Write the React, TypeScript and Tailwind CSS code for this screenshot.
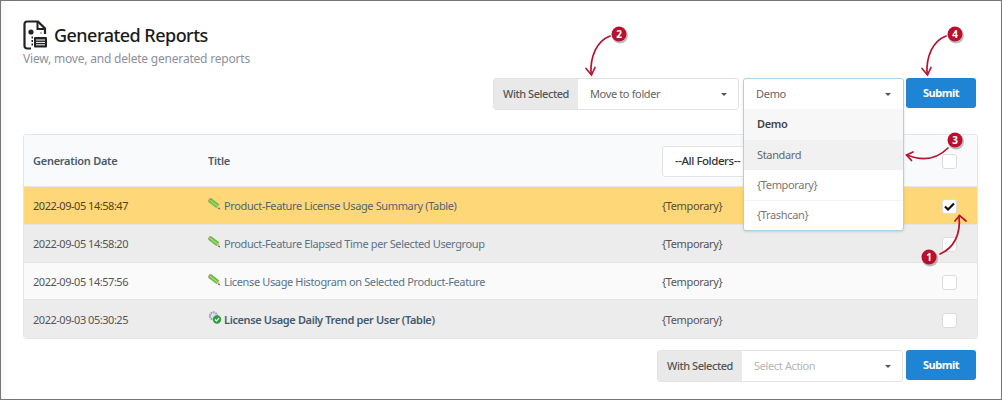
const font = { fontFamily: '"Noto Sans", "Open Sans", sans-serif' };

type Row = {
  date: string;
  title: string;
  done?: boolean;
  checked?: boolean;
  bg: string;
};

const rows: Row[] = [
  { date: "2022-09-05 14:58:47", title: "Product-Feature License Usage Summary (Table)", checked: true, bg: "bg-[#fed778] h-[38px]" },
  { date: "2022-09-05 14:58:20", title: "Product-Feature Elapsed Time per Selected Usergroup", bg: "bg-[#ececec] h-[38px]" },
  { date: "2022-09-05 14:57:56", title: "License Usage Histogram on Selected Product-Feature", bg: "bg-[#fafafa] h-[37px]" },
  { date: "2022-09-03 05:30:25", title: "License Usage Daily Trend per User (Table)", done: true, bg: "bg-[#ececec] h-[38px]" },
];

const Caret = () => (
  <svg width="6" height="3" viewBox="0 0 6 3" className="shrink-0">
    <path d="M0 0h6L3 3z" fill="#555" />
  </svg>
);

const PencilIcon = () => (
  <svg width="13" height="12" viewBox="0 0 13 12" className="shrink-0 -mt-[5px]">
    <path d="M2.8.3 11 6.6 8.6 9.8.4 3.5z" fill="#6fc644" stroke="#4c9a33" strokeWidth=".5" />
    <path d="M1.6 2 9.8 8.2" stroke="#b6e88f" strokeWidth=".9" />
    <path d="M2.8.3.4 3.5 0 2.2 1.6 0z" fill="#e98a80" />
    <path d="M11 6.6 8.6 9.8l3.6 1.6z" fill="#eec19c" />
    <path d="M10.8 9.6l1.6 2-2.2-.8z" fill="#3c3c4a" />
  </svg>
);

const GearIcon = () => (
  <svg width="14" height="13" viewBox="0 0 14 13" className="shrink-0 -mt-[5px]">
    <circle cx="5.5" cy="5" r="3.6" fill="none" stroke="#9a9fc0" strokeWidth="2.2" strokeDasharray="1.6 .7" />
    <circle cx="5.5" cy="5" r="2.4" fill="#dcdeea" />
    <circle cx="9" cy="8.5" r="4.2" fill="#2f9e3f" />
    <path d="M7 8.5l1.5 1.5 2.6-2.8" fill="none" stroke="#fff" strokeWidth="1.2" />
  </svg>
);

const ReportIcon = () => (
  <svg width="24" height="30" viewBox="0 0 24 30" className="shrink-0">
    <path d="M8 28.5H4A2.5 2.5 0 0 1 1.5 26V4A2.5 2.5 0 0 1 4 1.5h11l7 7V14" fill="none" stroke="#222" strokeWidth="2.2" />
    <path d="M14.5 1.5V9H22" fill="none" stroke="#222" strokeWidth="2" />
    <circle cx="8" cy="12" r="2.6" fill="#222" />
    <path d="M8.5 17.5h1.5M8.5 21h1.5M8.5 24.5h1.5" stroke="#222" strokeWidth="2" />
    <rect x="11" y="17" width="13" height="10.5" rx="1" fill="#222" />
    <path d="M13 20h9M13 22.4h9M13 24.8h9" stroke="#fff" strokeWidth="1" />
    <circle cx="18" cy="13" r=".9" fill="#999" />
  </svg>
);

const Badge = ({ n, cx, cy }: { n: number; cx: number; cy: number }) => (
  <g>
    <circle cx={cx + 1} cy={cy + 1.5} r="8" fill="#000" opacity=".25" />
    <circle cx={cx} cy={cy} r="7.5" fill="#bb0f2e" />
    <text x={cx} y={cy + 3.5} textAnchor="middle" fontSize="10" fontWeight="700" fill="#fff" fontFamily="Noto Sans">
      {n}
    </text>
  </g>
);

const Callouts = () => (
  <svg width="1002" height="400" viewBox="0 0 1002 400" className="absolute -left-px -top-px z-20 pointer-events-none">
    <g fill="none" stroke="#b8142f" strokeWidth="1.7" strokeLinecap="round">
      <path d="M610 36C597 41 590 56 591 74" />
      <path d="M586 68.5L591.5 75L595 67.5" />
      <path d="M946 36C933 41 926 56 927 74" />
      <path d="M922 68.5L927.5 75L931 67.5" />
      <path d="M948 148C936 160 922 161 907 155" />
      <path d="M913 152L906.5 155L911.5 160.5" />
      <path d="M940 254C954 248 961 234 959 216" />
      <path d="M955 221L959.5 215.5L966 221" />
    </g>
    <Badge n={2} cx={619} cy={34} />
    <Badge n={4} cx={955} cy={34} />
    <Badge n={3} cx={955} cy={140} />
    <Badge n={1} cx={929} cy={257} />
  </svg>
);

const Checkbox = ({ checked }: { checked?: boolean }) => (
  <div className="w-[15px] h-[15px] rounded-[3px] bg-white border border-[#dcdcdc] flex items-center justify-center">
    {checked && (
      <svg width="11" height="9" viewBox="0 0 11 9">
        <path d="M1 4.5l3 3 6-6" fill="none" stroke="#111" strokeWidth="2.2" />
      </svg>
    )}
  </div>
);

const WithSelected = ({ label, placeholder }: { label: string; placeholder?: boolean }) => (
  <div className="flex h-[32px] rounded-[3px] border border-[#e3e3e3] bg-white">
    <div className="w-[84px] flex items-center justify-center bg-[#e9e9e9] text-[11px] font-medium text-[#555] tracking-[-0.45px]">
      With Selected
    </div>
    <div className="w-[160px] flex items-center justify-between pl-[12px] pr-[11px] text-[11px] tracking-[-0.36px]">
      <span className={placeholder ? "text-[#b5b5b5]" : "text-[#666]"}>{label}</span>
      <Caret />
    </div>
  </div>
);

const SubmitButton = () => (
  <button className="w-[70px] h-[30px] rounded-[3px] bg-[#1f84d3] text-white text-[11px] font-bold tracking-[-0.5px]">Submit</button>
);

export default function App() {
  return (
    <div style={font} className="relative w-[1002px] h-[400px] overflow-hidden bg-white border border-[#777] pl-[22px] pr-[23px] pt-[19px] shadow-[inset_8px_0_8px_-6px_rgba(0,0,0,0.05)]">
      <Callouts />

      <div className="flex items-start gap-[7px] h-[30px]">
        <ReportIcon />
        <h1 className="text-[18px] font-medium leading-[30px] text-[#1b1b1b] tracking-[-0.53px]">Generated Reports</h1>
      </div>
      <p className="text-[12px] leading-[16px] text-[#8d8f9c] mt-[1px] tracking-[-0.2px]">View, move, and delete generated reports</p>

      <div className="relative flex justify-end mt-[11px] pr-[2px]">
        <WithSelected label="Move to folder" />
        <div className="relative w-[161px] h-[32px] ml-[4px] mr-[2px]">
          <div className="absolute top-0 left-0 right-0 z-10 rounded-[3px] border border-[#a9d4e6] bg-white shadow-sm">
            <div className="h-[30px] flex items-center justify-between pl-[12px] pr-[12px] text-[11px] text-[#666] tracking-[-0.3px]">
              <span>Demo</span>
              <Caret />
            </div>
            <ul className="text-[11px] tracking-[-0.35px]">
              <li className="h-[31px] flex items-center px-[13px] bg-[#f7f7f7] font-semibold text-[#444]">Demo</li>
              <li className="h-[30px] flex items-center px-[13px] bg-[#f1f1f1] text-[#666]">Standard</li>
              <li className="h-[31px] flex items-center px-[13px] text-[#777] border-b border-[#f3f3f3]">{"{Temporary}"}</li>
              <li className="h-[29px] flex items-center px-[13px] text-[#777]">{"{Trashcan}"}</li>
            </ul>
          </div>
        </div>
        <SubmitButton />
      </div>

      <div className="mt-[24px] w-[955px] rounded-[3px] border border-[#e6e6e6] overflow-hidden text-[11px] tracking-[-0.37px]">
        <div className="h-[52px] grid grid-cols-[175px_454px_1fr_35px] items-center pl-[9px] pt-[1px] bg-[#f9fafc] border-b border-[#e6e6e6]">
          <span className="font-semibold text-[#4a5a68] tracking-[-0.27px]">Generation Date</span>
          <span className="font-semibold text-[#4a5a68] tracking-[-0.27px]">Title</span>
          <div className="w-[140px] h-[31px] flex items-center pl-[12px] rounded-[3px] border border-[#e3e3e3] bg-white text-[11.5px] font-medium text-[#333] tracking-[-0.45px]">
            --All Folders--
          </div>
          <Checkbox />
        </div>
        {rows.map((row) => (
          <div
            key={row.date}
            className={`${row.bg} grid grid-cols-[175px_454px_1fr_35px] items-center pl-[9px] pt-[2px] border-b border-[#e4e4e4] last:border-b-0`}
          >
            <span className={`tracking-[-0.47px] ${row.checked ? "text-[#4d4426]" : "text-[#555]"}`}>{row.date}</span>
            <div className={`flex items-center ${row.done ? "gap-[2px]" : "gap-[3px]"}`}>
              {row.done ? <GearIcon /> : <PencilIcon />}
              <span className={row.done ? "font-semibold text-[#445a6e]" : row.checked ? "text-[#56646a]" : "text-[#5b7287]"}>
                {row.title}
              </span>
            </div>
            <span className={row.checked ? "text-[#5a4f2c]" : "text-[#555]"}>{"{Temporary}"}</span>
            <Checkbox checked={row.checked} />
          </div>
        ))}
      </div>

      <div className="flex justify-end gap-[3px] mt-[11px] pr-[2px]">
        <WithSelected label="Select Action" placeholder />
        <SubmitButton />
      </div>
    </div>
  );
}
